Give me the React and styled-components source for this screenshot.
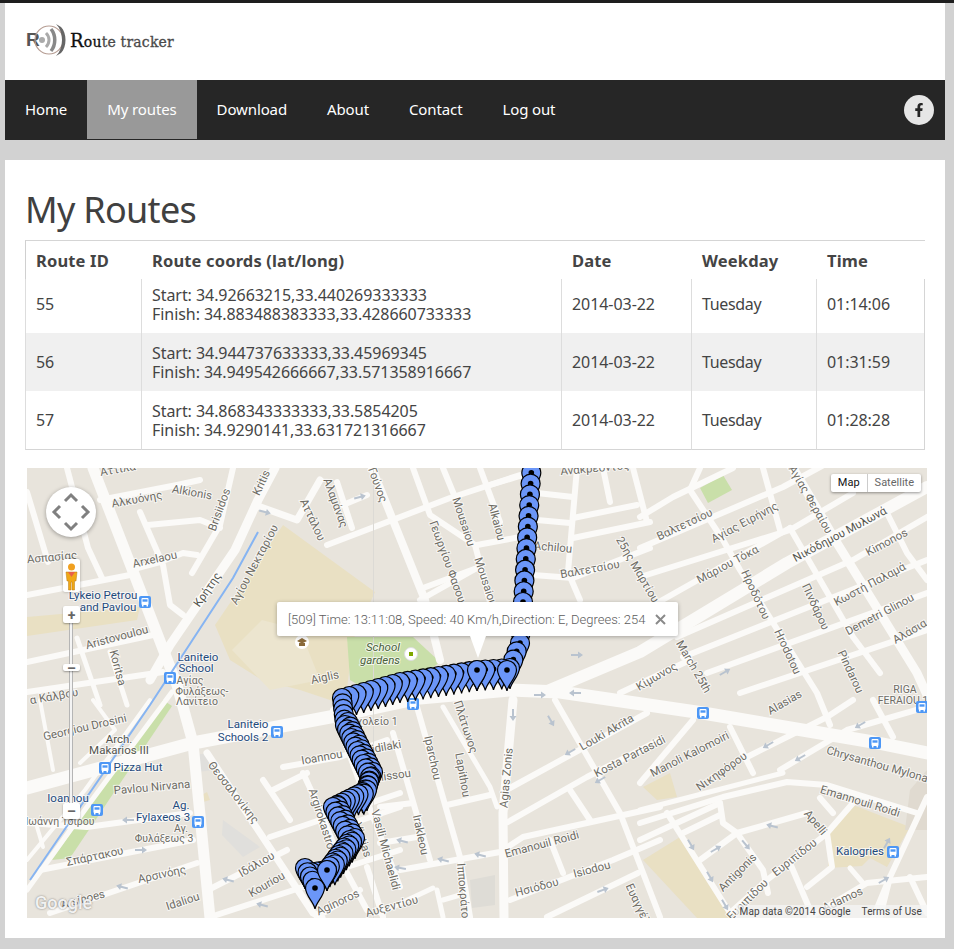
import styled, { createGlobalStyle } from "styled-components";
import { FaFacebookF } from "react-icons/fa";

const GlobalStyle = createGlobalStyle`
  * { box-sizing: border-box; }
  html, body { margin: 0; padding: 0; }
  body {
    background: #d2d2d2;
    font-family: "Noto Sans", "DejaVu Sans", sans-serif;
    color: #444;
  }
`;

const Page = styled.div`
  width: 954px;
  height: 949px;
  border-top: 3px solid #1e1e1e;
  padding: 0 9px 0 5px;
  overflow: hidden;
`;

const Header = styled.header`
  height: 77px;
  background: #fff;
  display: flex;
  align-items: center;
  padding: 0 20px;
`;

const Logo = styled.div`
  display: flex;
  align-items: center;
  margin-top: -4px;
`;

const LogoText = styled.div`
  font-family: "DejaVu Serif", "Liberation Serif", serif;
  font-size: 14px;
  letter-spacing: 0.2px;
  color: #4a4a4a;
  -webkit-text-stroke: 0.3px currentColor;
  margin-left: 2px;
  margin-top: 2px;
  white-space: nowrap;

  b {
    font-weight: 400;
    color: #111;
  }
  b:first-child {
    font-size: 18px;
  }
`;

const Nav = styled.nav`
  height: 60px;
  background: #262626;
  display: flex;
  position: relative;
`;

const NavItem = styled.a`
  height: 59px;
  padding: 0 20px 1px;
  display: flex;
  align-items: center;
  color: #fff;
  font-size: 15px;
  letter-spacing: -0.12px;
  background: ${(p) => (p.$active ? "#999" : "transparent")};
`;

const Social = styled.a`
  margin: 15px 11px 0 auto;
  width: 30px;
  height: 30px;
  border-radius: 50%;
  background: #e6e6e6;
  color: #262626;
  display: flex;
  align-items: center;
  justify-content: center;
  font-size: 14px;
`;

const Content = styled.main`
  margin-top: 20px;
  height: 778px;
  background: #fff;
  padding: 20px;
`;

const Title = styled.h1`
  margin: 0;
  height: 60px;
  font-size: 36px;
  line-height: 60px;
  font-weight: 400;
  letter-spacing: -0.7px;
  color: #404040;
`;

const Table = styled.table`
  width: 900px;
  table-layout: fixed;
  border-collapse: separate;
  border-spacing: 0;
  font-size: 16px;
  line-height: 19px;
`;

const Th = styled.th`
  height: 39px;
  padding: 1px 10px 0 11px;
  text-align: left;
  border-top: 1px solid #d5d5d5;
  font-weight: 700;
  font-size: 16.5px;
  letter-spacing: 0.15px;
  color: #444;
  &:first-child {
    border-left: 1px solid #d0d0d0;
    padding-left: 10px;
  }
`;

const Row = styled.tr`
  background: ${(p) => (p.$shaded ? "#f0f0f0" : "#fff")};

  td {
    padding: ${(p) => (p.$first ? "6px 10px 10px" : "10px")};
    border-bottom: ${(p) => (p.$last ? "1px solid #d5d5d5" : "none")};
  }
`;

const Td = styled.td`
  border-left: 1px solid #ddd;
  letter-spacing: ${(p) => (p.$word ? "-0.35px" : "-0.06px")};
  white-space: nowrap;
  &:last-child { border-right: 1px solid #d5d5d5; }
`;

const Coords = styled.div`
  margin: 1px 0 -1px;
`;

const MapWrap = styled.div`
  position: relative;
  width: 900px;
  height: 450px;
  margin: 18px 0 0 2px;
  overflow: hidden;
  background: #e8e4dc;
  font-family: Roboto, sans-serif;
`;

const MapSvg = styled.svg`
  display: block;
`;

const Road = styled.polyline`
  fill: none;
  stroke: #fbfaf8;
  stroke-linecap: round;
  stroke-linejoin: round;
`;

const Area = styled.polygon`
  stroke: none;
`;

const Label = styled.text`
  font-family: Roboto, sans-serif;
  font-size: ${(p) => (p.$kind === "small" ? "10.5px" : "11.5px")};
  font-style: ${(p) => (p.$kind === "park" ? "italic" : "normal")};
  fill: ${(p) =>
    p.$kind === "transit" ? "#1f4a7c" : p.$kind === "major" ? "#55554e" : p.$kind === "park" ? "#49603a" : "#6e6c64"};
  stroke: rgba(255, 255, 255, 0.7);
  stroke-width: 2px;
  paint-order: stroke;
  text-anchor: middle;
  dominant-baseline: middle;
`;

const PanControl = styled.div`
  position: absolute;
  left: 19px;
  top: 19px;
  width: 50px;
  height: 50px;
  border-radius: 50%;
  background: #fff;
  box-shadow: 0 1px 4px rgba(0, 0, 0, 0.35);
`;

const Pegman = styled.div`
  position: absolute;
  left: 36px;
  top: 91px;
  width: 17px;
  height: 33px;
  background: #fff;
  border-radius: 2px;
  box-shadow: 0 0 3px rgba(0, 0, 0, 0.3);
`;

const ZoomTrack = styled.div`
  position: absolute;
  left: 42px;
  top: 150px;
  width: 4px;
  height: 190px;
  background: #f4f4f4;
  border-left: 1px solid #b5b5b5;
  border-right: 1px solid #b5b5b5;
`;

const ZoomButton = styled.div`
  position: absolute;
  left: 36px;
  top: ${(p) => p.$top}px;
  width: 17px;
  height: ${(p) => p.$h}px;
  background: #fff;
  border-radius: 2px;
  box-shadow: 0 1px 2px rgba(0, 0, 0, 0.35);
  color: #666;
  display: flex;
  align-items: center;
  justify-content: center;
  font-size: 14px;
  font-weight: 700;
  line-height: 1;
`;

const MapType = styled.div`
  position: absolute;
  right: 6px;
  top: 6px;
  height: 18px;
  display: flex;
  background: #fff;
  border-radius: 2px;
  box-shadow: 0 1px 3px rgba(0, 0, 0, 0.4);
  font-size: 11px;
  line-height: 18px;
`;

const MapTypeItem = styled.div`
  padding: 0 7px;
  color: ${(p) => (p.$active ? "#111" : "#666")};
  border-left: ${(p) => (p.$active ? "none" : "1px solid #ccc")};
`;

const InfoWindow = styled.div`
  position: absolute;
  left: 250px;
  top: 134px;
  width: 401px;
  height: 34px;
  padding: 0 11px;
  display: flex;
  align-items: center;
  justify-content: space-between;
  background: #fff;
  border-radius: 2px;
  box-shadow: 0 1px 4px rgba(0, 0, 0, 0.3);
  color: #5c5c5c;
  font-size: 13px;
  font-weight: 300;
  white-space: nowrap;
`;

const InfoTail = styled.div`
  position: absolute;
  left: 193px;
  top: 34px;
  width: 16px;
  height: 22px;
  background: #fff;
  clip-path: polygon(0 0, 100% 0, 50% 100%);
`;

const CloseIcon = styled.svg`
  flex: none;
  margin-right: 1px;
`;

const Attribution = styled.div`
  position: absolute;
  right: 0;
  bottom: 0;
  height: 13px;
  padding: 0 5px 0 4px;
  display: flex;
  gap: 11px;
  background: rgba(245, 245, 245, 0.75);
  color: #444;
  font-size: 10px;
  line-height: 13px;
  letter-spacing: 0.1px;
`;

const GoogleMark = styled.div`
  position: absolute;
  left: 8px;
  bottom: 5px;
  color: rgba(255, 255, 255, 0.9);
  font-size: 18px;
  font-weight: 500;
  text-shadow: 0 0 2px rgba(90, 90, 90, 0.8);
`;

const areas = [
  ["#e9e0c3", "215,625 283,525 375,592 353,640 345,705 300,690 262,680 230,660"],
  ["#ece5cf", "232,650 262,620 300,630 320,680 270,690"],
  ["#c9dfa9", "347,637 413,637 440,662 407,687 370,692 350,680"],
  ["#e9e0c3", "27,617 140,607 137,620 27,636"],
  ["#c9dfa9", "163,700 172,706 70,858 52,860"],
  ["#c9dfa9", "700,488 723,475 732,490 708,503"],
  ["#e9e0c3", "853,805 910,827 887,867 870,858 862,866 828,868 828,833"],
  ["#e9e0c3", "643,860 680,837 732,918 697,918"],
  ["#e9e0c3", "643,787 670,773 677,797 657,800"],
  ["#e0dfdc", "223,820 260,847 243,857 222,835"],
  ["#e0dfdc", "196,755 207,753 214,770 198,772"],
  ["#e0dad0", "910,790 927,770 927,830 905,830"],
  ["#dedcd6", "470,880 495,875 495,905 472,908"],
  ["#e9e0c3", "200,796 207,792 210,800 203,802"],
];

const roads = [
  // main roads
  [13, "27,788 193,743 330,717 420,698 510,690 560,692 703,713 873,742 927,753"],
  [12, "927,487 787,563 640,652 545,692"],
  [11, "93,468 177,685 193,743 210,918"],
  [9, "275,468 258,500 235,550 170,645 150,680"],
  [7, "320,480 297,520 255,505"],
  [7, "207,753 313,913 322,918"],
  [9, "513,700 503,813 504,918"],
  [8, "372,468 425,600 440,660"],
  [5, "443,707 490,787 497,807"],
  [6, "927,797 890,877 873,918"],
  [9, "793,468 837,543 917,673 927,695"],
  [5, "640,810 783,773"],
  [6, "640,823 723,797 787,782 827,785 917,813"],
  [6, "400,870 500,852 523,837 660,807"],
  [5, "172,692 92,800 27,890"],
  [4, "150,700 85,790 27,860"],
  // top left
  [6, "27,492 48,562"],
  [6, "27,595 130,575"],
  [6, "140,512 163,565 170,605 183,615"],
  [6, "148,525 200,520 220,528"],
  [6, "233,468 220,525 192,573"],
  [6, "100,500 177,485 200,480"],
  [6, "130,570 160,562 183,553 197,555"],
  [6, "27,662 153,635"],
  [6, "27,692 163,672"],
  [5, "77,638 100,705"],
  [5, "110,652 127,705"],
  [6, "67,468 88,548 102,578"],
  // bottom left
  [4, "40,700 53,770"],
  [4, "93,700 115,730 80,763"],
  [6, "27,823 87,827 190,813"],
  [6, "40,870 193,840"],
  [6, "50,913 197,863"],
  [4, "37,827 43,847"],
  [6, "208,890 287,850"],
  [6, "210,917 303,887"],
  [6, "270,837 400,793"],
  [6, "283,767 340,757 387,740"],
  [6, "263,780 290,820"],
  [6, "273,790 307,773"],
  [6, "303,773 317,803 340,860 367,910"],
  [6, "333,710 360,783 400,887"],
  [6, "353,823 400,807"],
  [6, "347,867 400,850"],
  [6, "317,917 360,890"],
  [6, "367,867 383,917"],
  // centre
  [6, "417,707 460,857 470,917"],
  [6, "393,733 430,860"],
  [6, "447,805 490,795"],
  [6, "380,807 413,803"],
  [6, "380,843 417,837"],
  [6, "508,822 587,777 660,740"],
  [6, "510,788 647,713"],
  [6, "555,700 620,813 660,917"],
  [6, "570,790 590,820"],
  [6, "550,840 563,873"],
  [6, "510,900 613,860 660,840"],
  [6, "547,917 638,873"],
  [5, "437,890 443,917"],
  [5, "380,913 433,888"],
  [5, "443,900 460,895"],
  // top centre
  [6, "327,545 450,498 520,475"],
  [6, "413,468 430,515 475,545 490,602"],
  [6, "443,468 457,502"],
  [6, "480,468 500,522"],
  [6, "423,588 477,568"],
  [6, "477,545 520,537"],
  [6, "490,485 523,475"],
  [6, "537,493 573,497"],
  [6, "537,520 570,523"],
  [6, "577,468 568,572 580,600"],
  [6, "533,575 573,578"],
  [6, "573,518 637,505"],
  [6, "573,538 650,522"],
  [6, "603,468 610,502"],
  [6, "633,468 647,522"],
  [6, "573,578 650,548"],
  [6, "343,505 367,495"],
  [6, "337,482 352,528"],
  [6, "420,600 477,568"],
  // top right
  [6, "640,517 673,497 733,468"],
  [6, "640,548 783,487 833,460"],
  [6, "640,577 790,530 853,493"],
  [6, "590,620 650,607 790,528"],
  [6, "790,528 853,637 880,673"],
  [6, "763,468 780,530"],
  [6, "700,468 690,490 723,540 740,570 817,693 830,725"],
  [6, "677,637 853,560 927,517"],
  [6, "683,657 927,560"],
  [6, "707,673 927,593"],
  [6, "740,693 927,630"],
  [6, "887,513 907,553 927,580"],
  [6, "620,693 690,660"],
  // bottom right
  [6, "730,727 753,773"],
  [6, "747,757 827,717 853,700"],
  [6, "640,783 693,720"],
  [6, "780,770 847,730 927,707"],
  [6, "873,700 893,737"],
  [6, "820,798 833,813"],
  [6, "853,803 827,833 832,867 807,887"],
  [6, "825,835 767,880 730,913"],
  [6, "807,813 737,833 700,860"],
  [6, "720,803 723,823 737,833 763,870 768,893"],
  [6, "667,813 730,913"],
  [6, "683,833 720,815"],
  [6, "640,840 720,803"],
  [6, "790,863 813,917"],
  [5, "850,868 863,883"],
  [6, "810,917 867,883 927,877"],
  [6, "880,917 890,877"],
  [6, "910,877 927,913"],
];

const labels = [
  [118, 470, -10, "Αττίλα"],
  [137, 500, -10, "Αλκυόνης"],
  [192, 493, 10, "Alkionis"],
  [220, 510, -70, "Brisiidos"],
  [262, 483, -65, "Kritis"],
  [312, 520, 65, "Αττάλου"],
  [52, 558, -5, "Ασπασίας"],
  [155, 560, -12, "Arxelaou"],
  [208, 590, -55, "Κρήτης", "major"],
  [255, 565, -62, "Αγίου Νεκταρίου"],
  [103, 596, 0, "Lykeio Petrou", "transit"],
  [108, 608, 0, "and Pavlou", "transit"],
  [117, 638, -15, "Aristovoulou"],
  [117, 668, 75, "Koritsa"],
  [198, 658, 0, "Laniteio", "transit"],
  [196, 669, 0, "School", "transit"],
  [190, 681, 0, "Αγίας", "small"],
  [202, 692, 0, "Φυλάξεως-", "small"],
  [197, 702, 0, "Λανίτειο", "small"],
  [54, 697, -10, "α Κάλβου"],
  [85, 728, -13, "Georgiou Drosini"],
  [119, 740, 0, "Arch.", "major"],
  [119, 751, 0, "Makarios III", "major"],
  [138, 768, 0, "Pizza Hut", "transit"],
  [152, 788, -5, "Pavlou Nirvana"],
  [68, 799, 0, "Ioannou", "transit"],
  [60, 822, 0, "Ιωάννη Τσίρου", "small"],
  [181, 806, 0, "Ag.", "transit"],
  [163, 818, 0, "Fylaxeos 3", "transit"],
  [181, 829, 0, "Αγ.", "small"],
  [164, 839, 0, "Φυλάξεως 3", "small"],
  [95, 857, -12, "Σπάρτακου"],
  [162, 875, -12, "Αρσινόης"],
  [83, 900, -15, "Arsinoes"],
  [183, 902, -18, "Idaliou"],
  [257, 865, -30, "Ιδάλιου"],
  [267, 885, -30, "Kouriou"],
  [233, 793, 52, "Θεσσαλονίκης"],
  [248, 725, 0, "Laniteio", "transit"],
  [243, 738, 0, "Schools 2", "transit"],
  [322, 758, -10, "Ioannou"],
  [383, 748, -10, "Vidilaki"],
  [387, 777, -8, "Ermissou"],
  [322, 822, 72, "Argirokastrou"],
  [362, 840, 72, "Viotias"],
  [385, 850, 75, "Vasili Michaelidi"],
  [338, 903, -25, "Aginoros"],
  [392, 907, -15, "Αυξεντίου"],
  [325, 678, -12, "Aiglis"],
  [383, 648, 0, "School", "park"],
  [380, 661, 0, "gardens", "park"],
  [374, 722, 0, "Σχολείο 1", "small"],
  [447, 562, 70, "Γεωργίου Φασου"],
  [463, 522, 72, "Mousaiou"],
  [485, 582, 72, "Mousaiou"],
  [496, 522, 75, "Alkaiou"],
  [335, 503, 70, "Αλαμάνας"],
  [377, 485, 70, "Γούνος"],
  [553, 548, 5, "Achilou"],
  [590, 570, -10, "Βαλτετσίου"],
  [685, 525, -25, "Βαλτετσίου"],
  [595, 469, -5, "Ανακρέοντος"],
  [637, 570, 60, "25ης Μαρτίου"],
  [745, 523, -28, "Αγίας Ειρήνης"],
  [728, 565, -28, "Μάριου Τόκα"],
  [755, 595, 65, "Ηροδότου"],
  [787, 652, 65, "Hrodotou"],
  [840, 535, -28, "Νικόδημου Μυλωνά", "major"],
  [887, 543, -28, "Kimonos"],
  [870, 585, -28, "Κωστή Παλαμά"],
  [880, 615, -28, "Demetri Glinou"],
  [910, 632, -30, "Αλάσια"],
  [815, 607, 65, "Πινδάρου"],
  [850, 672, 65, "Pindarou"],
  [810, 500, 60, "Αγίας Φεραίου"],
  [657, 677, -30, "Κίμωνος"],
  [693, 667, 60, "March 25th"],
  [785, 703, -30, "Alasias"],
  [905, 690, 0, "RIGA", "small"],
  [903, 701, 0, "FERAIOU 1", "small"],
  [607, 733, -30, "Louki Akrita"],
  [630, 757, -27, "Kosta Partasidi"],
  [507, 778, -85, "Agias Zonis"],
  [432, 758, 78, "Iparchou"],
  [462, 775, 80, "Lapithou"],
  [465, 727, 72, "Πλάτωνος"],
  [420, 835, 78, "Irakleou"],
  [463, 897, 85, "Ιπποκράτους"],
  [542, 845, -15, "Emanouil Roidi"],
  [537, 888, -15, "Ησιόδου"],
  [592, 870, -15, "Isiodou"],
  [690, 755, -27, "Manoli Kalomoiri"],
  [722, 772, -35, "Νικηφόρου"],
  [877, 765, 16, "Chrysanthou Mylona"],
  [860, 802, 17, "Emannouil Roidi"],
  [815, 823, 50, "Apelli"],
  [860, 852, 0, "Kalogries", "transit"],
  [795, 858, -38, "Ευριπίδου"],
  [738, 873, -45, "Antigonis"],
  [748, 900, -45, "Ευριπίδου"],
  [640, 910, 65, "Ευαγγέλου"],
  [843, 900, -25, "Adamos"],
];

const buses = [
  [145, 602], [170, 678], [105, 768], [97, 810], [198, 822], [277, 732],
  [413, 704], [703, 713], [875, 743], [893, 852], [922, 707],
];

const arrows = [
  [265, 512, 15], [360, 497, -15], [128, 820, 180], [141, 850, 0], [122, 887, 195],
  [228, 880, 195], [262, 905, 195], [577, 655, 0], [540, 695, 0], [575, 693, 180],
  [513, 715, 90], [551, 721, 60], [570, 752, 150], [600, 780, 150], [402, 841, 195],
  [443, 860, 195], [480, 855, 195], [400, 868, 190], [603, 890, -20], [725, 672, -30],
  [772, 826, 195], [716, 849, -30], [691, 845, 60], [710, 877, 60], [725, 905, 60],
  [746, 845, 50], [887, 843, -60], [884, 880, -30], [768, 745, 150], [800, 758, 150],
  [860, 725, 150],
];

// route legs as [x1, y1, x2, y2, spacing]
const legs = [
  [532, 462, 523, 602, 11],
  [523, 602, 520, 643, 11],
  [520, 643, 510, 668, 8],
  [510, 668, 477, 670, 8],
  [477, 670, 400, 682, 8],
  [400, 682, 342, 698, 8],
  [342, 698, 345, 725, 5],
  [345, 725, 370, 777, 5],
  [370, 777, 367, 790, 5],
  [367, 790, 333, 807, 5],
  [333, 807, 350, 840, 5],
  [350, 840, 327, 870, 5],
  [327, 870, 307, 873, 5],
  [348, 722, 373, 772, 5],
  [373, 772, 362, 798, 5],
  [338, 806, 355, 838, 5],
  [355, 838, 332, 868, 5],
  [305, 868, 315, 885, 5],
];

function buildPins() {
  const pins = [];
  legs.forEach(([x1, y1, x2, y2, step]) => {
    const n = Math.max(1, Math.round(Math.hypot(x2 - x1, y2 - y1) / step));
    for (let k = 0; k < n; k++) {
      pins.push([x1 + ((x2 - x1) * k) / n, y1 + ((y2 - y1) * k) / n]);
    }
  });
  return pins.sort((a, b) => a[1] - b[1]);
}

const pins = buildPins();
const topPins = [[477, 670], [507, 670], [327, 870], [315, 888]];

function Pin({ x, y }) {
  return (
    <g transform={`translate(${x} ${y})`}>
      <path
        d="M0 21C-1 14-9.500 8-9.500 0A9.500 9.500 0 1 1 9.500 0C9.500 8 1 14 0 21Z"
        fill="#6b96f8"
        stroke="#000"
        strokeWidth="1.2"
      />
      <circle r="2.8" fill="#000" />
    </g>
  );
}

function BusIcon({ x, y }) {
  return (
    <g transform={`translate(${x - 6} ${y - 6})`}>
      <rect width="12" height="12" rx="2" fill="#4d97f5" />
      <rect x="2.500" y="2" width="7" height="7" rx="1" fill="#fff" />
      <rect x="3.500" y="3.300" width="5" height="2.400" fill="#4d97f5" />
      <rect x="3" y="9" width="1.500" height="1.500" fill="#fff" />
      <rect x="7.500" y="9" width="1.500" height="1.500" fill="#fff" />
    </g>
  );
}

function OneWay({ x, y, a }) {
  return (
    <path
      transform={`translate(${x} ${y}) rotate(${a})`}
      d="M-6-1H1V-3.500L6 0 1 3.500V1H-6Z"
      fill="#b9c3cf"
    />
  );
}

function MapDrawing() {
  return (
    <MapSvg width="900" height="450" viewBox="27 468 900 450">
      <rect x="27" y="468" width="900" height="450" fill="#e8e4dc" />
      {areas.map(([fill, pts], i) => (
        <Area key={i} fill={fill} points={pts} />
      ))}
      {roads.map(([w, pts], i) => (
        <Road key={i} strokeWidth={w} points={pts} />
      ))}
      <polyline points="258,532 233,578 150,705 30,880" fill="none" stroke="#86b4f2" strokeWidth="2" />
      <line x1="373.500" y1="468" x2="373.500" y2="918" stroke="#dcdad5" strokeWidth="1" />
      <circle cx="302" cy="642" r="7" fill="#fff" />
      <path d="M297 641l5-3 5 3-5 2.500zM299 643h6v3h-6z" fill="#8a6a3a" />
      <circle cx="411" cy="654" r="6.500" fill="#fff" stroke="#ddd" />
      <rect x="409" y="652" width="4" height="4" fill="#7fa800" />
      {arrows.map(([x, y, a], i) => (
        <OneWay key={i} x={x} y={y} a={a} />
      ))}
      {labels.map(([x, y, a, text, kind], i) => (
        <Label key={i} x={x} y={y} $kind={kind} transform={a ? `rotate(${a} ${x} ${y})` : undefined}>
          {text}
        </Label>
      ))}
      {buses.map(([x, y], i) => (
        <BusIcon key={i} x={x} y={y} />
      ))}
      {pins.map(([x, y], i) => (
        <Pin key={i} x={x} y={y} />
      ))}
      {topPins.map(([x, y], i) => (
        <Pin key={i} x={x} y={y} />
      ))}
    </MapSvg>
  );
}

const routes = [
  { id: 55, start: "34.92663215,33.440269333333", finish: "34.883488383333,33.428660733333", time: "01:14:06" },
  { id: 56, start: "34.944737633333,33.45969345", finish: "34.949542666667,33.571358916667", time: "01:31:59" },
  { id: 57, start: "34.868343333333,33.5854205", finish: "34.9290141,33.631721316667", time: "01:28:28" },
];

const navItems = ["Home", "My routes", "Download", "About", "Contact", "Log out"];

export default function App() {
  return (
    <Page>
      <GlobalStyle />
      <Header>
        <Logo>
          <svg width="43" height="34" viewBox="0 0 43 34">
            <text x="1" y="23" fontFamily="Liberation Sans" fontWeight="700" fontSize="19" fill="#555">R</text>
            <circle cx="24" cy="17" r="14" fill="none" stroke="#b59c92" strokeWidth="1.200" />
            <path d="M31 1C39 9 39 25 31 33L36 30C42 24 42 10 36 4Z" fill="#666" />
            <path d="M26 6C31 12 31 22 26 28" fill="none" stroke="#888" strokeWidth="3.500" />
            <path d="M21 10C25 14 25 20 21 24" fill="none" stroke="#aaa" strokeWidth="3" />
            <circle cx="17" cy="17" r="3" fill="#aaa" />
          </svg>
          <LogoText>
            <b>R</b><b>ou</b>te tracker
          </LogoText>
        </Logo>
      </Header>
      <Nav>
        {navItems.map((item) => (
          <NavItem key={item} $active={item === "My routes"}>
            {item}
          </NavItem>
        ))}
        <Social>
          <FaFacebookF />
        </Social>
      </Nav>
      <Content>
        <Title>My Routes</Title>
        <Table>
          <colgroup>
            <col width="116" />
            <col width="420" />
            <col width="130" />
            <col width="125" />
            <col width="109" />
          </colgroup>
          <thead>
            <tr>
              <Th>Route ID</Th>
              <Th>Route coords (lat/long)</Th>
              <Th>Date</Th>
              <Th>Weekday</Th>
              <Th>Time</Th>
            </tr>
          </thead>
          <tbody>
            {routes.map((r, i) => (
              <Row key={r.id} $shaded={i === 1} $first={i === 0} $last={i === 2}>
                <Td>{r.id}</Td>
                <Td>
                  <Coords>
                    Start: {r.start}
                    <br />
                    Finish: {r.finish}
                  </Coords>
                </Td>
                <Td>2014-03-22</Td>
                <Td $word>Tuesday</Td>
                <Td>{r.time}</Td>
              </Row>
            ))}
          </tbody>
        </Table>
        <MapWrap>
          <MapDrawing />
          <PanControl>
            <svg width="50" height="50" viewBox="0 0 50 50" fill="none" stroke="#808080" strokeWidth="3">
              <path d="M19 14l6-6 6 6M19 36l6 6 6-6M14 19l-6 6 6 6M36 19l6 6-6 6" />
            </svg>
          </PanControl>
          <Pegman>
            <svg width="17" height="33" viewBox="0 0 17 33">
              <circle cx="8.500" cy="8" r="3.500" fill="#f0a020" />
              <path d="M3 13H14L13 22H11.500V31H9V23H8V31H5.500V22H4Z" fill="#f0a818" stroke="#b87a10" strokeWidth="0.500" />
              <path d="M5 13H12L8.500 18Z" fill="#e8604a" />
            </svg>
          </Pegman>
          <ZoomTrack />
          <ZoomButton $top={138} $h={17}>+</ZoomButton>
          <ZoomButton $top={196} $h={7}>–</ZoomButton>
          <ZoomButton $top={335} $h={16}>–</ZoomButton>
          <MapType>
            <MapTypeItem $active>Map</MapTypeItem>
            <MapTypeItem>Satellite</MapTypeItem>
          </MapType>
          <InfoWindow>
            <span>[509] Time: 13:11:08, Speed: 40 Km/h,Direction: E, Degrees: 254</span>
            <CloseIcon width="11" height="11" viewBox="0 0 11 11" stroke="#8a8a8a" strokeWidth="2">
              <path d="M1 1L10 10M10 1L1 10" />
            </CloseIcon>
            <InfoTail />
          </InfoWindow>
          <GoogleMark>Google</GoogleMark>
          <Attribution>
            <span>Map data ©2014 Google</span>
            <span>Terms of Use</span>
          </Attribution>
        </MapWrap>
      </Content>
    </Page>
  );
}
